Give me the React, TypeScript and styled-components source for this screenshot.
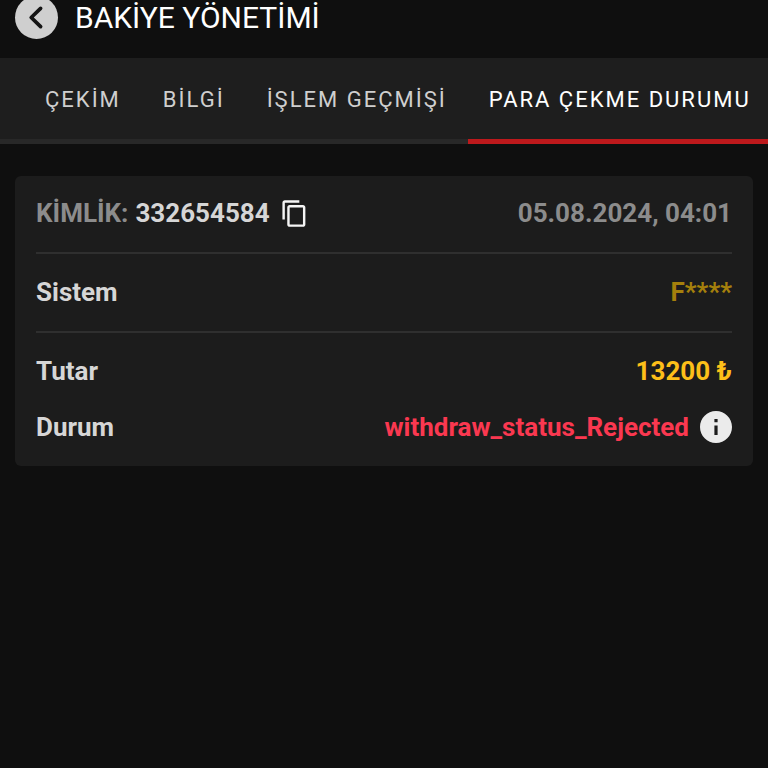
import React, { useState } from "react";
import styled, { createGlobalStyle } from "styled-components";

const GlobalStyle = createGlobalStyle`
  *, *::before, *::after { box-sizing: border-box; }
  html { background: #0f0f0f; }
  body {
    margin: 0;
    background: #0f0f0f;
    color: #d8d8d8;
    font-family: Roboto, "Liberation Sans", sans-serif;
  }
  button {
    padding: 0;
    border: 0;
    background: none;
    color: inherit;
    font: inherit;
    cursor: pointer;
  }
  svg { display: block; }
`;

const Page = styled.div`
  min-height: 100vh;
  overflow: hidden;
`;

const Header = styled.header`
  display: flex;
  align-items: center;
  gap: 17px;
  margin-top: -4px;
  padding: 0 15px 19px;
`;

const BackButton = styled.button`
  display: grid;
  place-items: center;
  flex: none;
  width: 43px;
  height: 43px;
  border-radius: 50%;
  background: #cfcfcf;
  color: #151515;
`;

const Title = styled.h1`
  margin: 0;
  color: #ffffff;
  font-size: 30px;
  font-weight: 400;
  line-height: 42px;
`;

const TabBar = styled.nav`
  display: flex;
  overflow: hidden;
  padding-left: 24px;
  background: #1e1e1e;
  box-shadow: inset 0 -5px #282828;
`;

const Tab = styled.button<{ $active: boolean }>`
  flex: none;
  height: 86px;
  padding: 3px 21px 0;
  border-bottom: 5px solid ${({ $active }) => ($active ? "#bd191c" : "transparent")};
  color: ${({ $active }) => ($active ? "#ffffff" : "#cfcfcf")};
  font-size: 22px;
  line-height: 28px;
  letter-spacing: 2px;
  white-space: nowrap;
`;

const Card = styled.section`
  margin: 32px 15px 0;
  padding: 0 21px;
  border-radius: 6px;
  background: #1c1c1c;
  font-size: 26px;
  font-weight: 700;
  line-height: 32px;
`;

const Group = styled.div`
  padding: 10px 0 11px;

  &:first-child {
    padding-top: 9px;
  }

  & + & {
    border-top: 2px solid #2f2f2f;
  }
`;

const Row = styled.div`
  display: flex;
  align-items: center;
  justify-content: space-between;
  gap: 12px;
  min-height: 56px;
`;

const Identity = styled.div`
  display: flex;
  align-items: center;
  gap: 7px;
`;

const Status = styled.div`
  display: flex;
  align-items: center;
  gap: 11px;
`;

const tones = {
  plain: "#d6d6d6",
  muted: "#8c8c8c",
  dimGold: "#a5800c",
  gold: "#fdbf19",
  danger: "#fa3850",
};

const Text = styled.span<{ $tone?: keyof typeof tones }>`
  color: ${({ $tone = "plain" }) => tones[$tone]};
`;

const IconButton = styled.button<{ $color: string }>`
  flex: none;
  color: ${({ $color }) => $color};
`;

const CopyButton = styled(IconButton)`
  margin-left: 3px;
`;

const tabs = ["ÇEKİM", "BİLGİ", "İŞLEM GEÇMİŞİ", "PARA ÇEKME DURUMU"];

export default function App() {
  const [active, setActive] = useState(3);
  const id = "332654584";

  return (
    <Page>
      <GlobalStyle />
      <Header>
        <BackButton aria-label="Geri">
          <svg width="43" height="43" viewBox="0 0 44 44" fill="none" stroke="currentColor" strokeWidth="3.8">
            <path d="M26.2 12.7 16.6 22l9.6 9.3" strokeLinecap="round" strokeLinejoin="round" />
          </svg>
        </BackButton>
        <Title>BAKİYE YÖNETİMİ</Title>
      </Header>
      <TabBar>
        {tabs.map((label, index) => (
          <Tab
            key={label}
            $active={index === active}
            aria-current={index === active ? "page" : undefined}
            onClick={() => setActive(index)}
          >
            {label}
          </Tab>
        ))}
      </TabBar>
      <main>
        <Card>
          <Group>
            <Row>
              <Identity>
                <Text $tone="muted">KİMLİK:</Text>
                <Text>{id}</Text>
                <CopyButton
                  $color="#f5f5f5"
                  aria-label="Kopyala"
                  onClick={() => navigator.clipboard?.writeText(id)}
                >
                  <svg width="29" height="29" viewBox="0 0 24 24" fill="currentColor">
                    <path d="M16 1H4c-1.1 0-2 .9-2 2v14h2V3h12V1zm3 4H8c-1.1 0-2 .9-2 2v14c0 1.1.9 2 2 2h11c1.1 0 2-.9 2-2V7c0-1.1-.9-2-2-2zm0 16H8V7h11v14z" />
                  </svg>
                </CopyButton>
              </Identity>
              <Text $tone="muted">05.08.2024, 04:01</Text>
            </Row>
          </Group>
          <Group>
            <Row>
              <Text>Sistem</Text>
              <Text $tone="dimGold">F****</Text>
            </Row>
          </Group>
          <Group>
            <Row>
              <Text>Tutar</Text>
              <Text $tone="gold">13200 ₺</Text>
            </Row>
            <Row>
              <Text>Durum</Text>
              <Status>
                <Text $tone="danger">withdraw_status_Rejected</Text>
                <IconButton $color="#ebebeb" aria-label="Bilgi">
                  <svg width="32" height="32" viewBox="2 2 20 20" fill="currentColor">
                    <path d="M12 2C6.48 2 2 6.48 2 12s4.48 10 10 10 10-4.48 10-10S17.52 2 12 2zm1 15h-2v-6h2v6zm0-8h-2V7h2v2z" />
                  </svg>
                </IconButton>
              </Status>
            </Row>
          </Group>
        </Card>
      </main>
    </Page>
  );
}
